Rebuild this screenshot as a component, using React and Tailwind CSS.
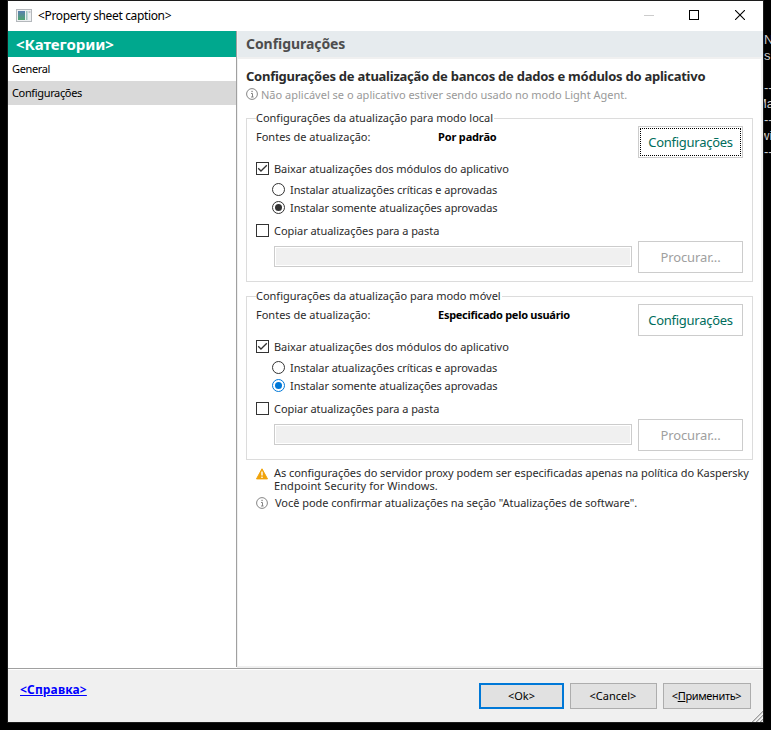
import React, { useState } from 'react'

const CATEGORIES = ['General', 'Configurações']

const GROUPS = [
  {
    id: 'local',
    legend: 'Configurações da atualização para modo local',
    source: 'Por padrão',
    sourceClass: 'tracking-[-0.16px]',
    focused: true,
    radioColor: '#333333',
  },
  {
    id: 'mobile',
    legend: 'Configurações da atualização para modo móvel',
    source: 'Especificado pelo usuário',
    sourceClass: 'tracking-[-0.27px]',
    focused: false,
    radioColor: '#0078d7',
  },
]

// what is left visible of the console window behind the dialog
const CONSOLE_LINES = [
  { text: 'N', className: 'mt-[32px]' },
  { text: 's', className: '' },
  { text: '--', className: 'mt-[16px]' },
  { text: 'Ma', className: '-indent-[8px]' },
  { text: '--', className: '' },
  { text: 'wi', className: '-indent-[4px]' },
  { text: '--', className: '' },
]

const InfoIcon = ({ className = '' }) => (
  <svg className={`shrink-0 ${className}`} width="12" height="12" viewBox="0 0 12 12" fill="none">
    <circle cx="6" cy="6" r="5.4" stroke="#858585" />
    <path d="M5 5.5h1.5V9M5 9h2.6" stroke="#858585" />
    <rect x="5.4" y="2.8" width="1.3" height="1.3" fill="#858585" />
  </svg>
)

const WarningIcon = ({ className = '' }) => (
  <svg className={`shrink-0 ${className}`} width="12" height="12" viewBox="0 0 12 12">
    <path d="M6 0.8L11.5 10.9H0.5z" fill="#f0a30a" stroke="#f0a30a" strokeLinejoin="round" />
    <path d="M6 3.5v4" stroke="#fff" strokeWidth="1.4" />
    <rect x="5.3" y="8.6" width="1.4" height="1.4" fill="#fff" />
  </svg>
)

const AppIcon = () => (
  <svg className="shrink-0" width="16" height="14" viewBox="0 0 16 14">
    <defs>
      <linearGradient id="pane" x1="0" y1="0" x2="0" y2="1">
        <stop offset="0" stopColor="#5a7fb0" />
        <stop offset="1" stopColor="#4fa56f" />
      </linearGradient>
    </defs>
    <rect x="0.5" y="0.5" width="15" height="12" fill="#eef0f2" stroke="#b4b8bc" />
    <rect x="2" y="2" width="7" height="9" fill="url(#pane)" />
    <rect x="10" y="2" width="1.5" height="9" fill="#9cc4bc" />
    <rect x="12.5" y="2" width="2" height="2" fill="#c3c8cd" />
  </svg>
)

const TitleBar = () => (
  <div className="h-[30px] flex items-start bg-white pl-2">
    <div className="flex items-center h-[29px] gap-[6px]">
      <AppIcon />
      <span className="text-[12px] leading-[18px] pt-px text-black tracking-[-0.36px]">{'<Property sheet caption>'}</span>
    </div>
    <div className="ml-auto flex gap-[35px] mr-[18px] mt-[9px]">
      <svg width="10" height="10" viewBox="0 0 10 10">
        <rect y="5" width="10" height="1" fill="#cccccc" />
      </svg>
      <svg width="10" height="10" viewBox="0 0 10 10" fill="none">
        <rect x="0.5" y="0.5" width="9" height="9" stroke="#000" />
      </svg>
      <svg className="ml-px" width="10" height="10" viewBox="0 0 10 10">
        <path d="M0 0L10 10M10 0L0 10" stroke="#000" strokeWidth="1.1" />
      </svg>
    </div>
  </div>
)

const Sidebar = ({ selected, onSelect }) => (
  <div className="w-[229px] h-[636px] border-r border-[#a0a0a0] bg-white shrink-0">
    <div className="h-[26px] leading-[26px] bg-[#00a88e] text-white text-[15px] font-bold pl-2 tracking-[-0.05px]">
      {'<Категории>'}
    </div>
    {CATEGORIES.map(name => (
      <div
        key={name}
        onClick={() => onSelect(name)}
        className={`h-6 leading-[24px] pl-1 text-black tracking-[-0.35px] ${name === selected ? 'bg-[#d9d9d9]' : ''}`}
      >
        {name}
      </div>
    ))}
  </div>
)

const Checkbox = ({ checked, label, className }) => (
  <div className={`flex items-start h-[13px] ${className}`}>
    <span className="w-[13px] h-[13px] border border-[#333333] shrink-0">
      {checked && (
        <svg className="block" width="11" height="11" viewBox="0 0 11 11" fill="none">
          <path d="M1.2 5.2L4 8L9.8 2.2" stroke="#333" strokeWidth="1.3" />
        </svg>
      )}
    </span>
    <span className="ml-[5px] leading-[13px] tracking-[-0.05px] whitespace-nowrap">{label}</span>
  </div>
)

const Radio = ({ checked, color, label, className }) => (
  <div className={`flex items-start h-[13px] pl-4 ${className}`}>
    <svg className="shrink-0" width="13" height="13" viewBox="0 0 13 13">
      <circle cx="6.5" cy="6.5" r="6" fill="#fff" stroke={checked ? color : '#333333'} />
      {checked && <circle cx="6.5" cy="6.5" r="3.5" fill={color} />}
    </svg>
    <span className="ml-[5px] leading-[13px] tracking-[-0.08px] whitespace-nowrap">{label}</span>
  </div>
)

const PanelButton = ({ children, focused, disabled }) => (
  <button
    disabled={disabled}
    className={`w-[105px] h-8 p-px border border-[#cccccc] bg-white text-[13px] shrink-0 ml-auto ${
      disabled ? 'text-[#a0a0a0] tracking-[-0.1px]' : 'text-[#006d5c] tracking-[-0.26px]'
    }`}
  >
    <span
      className={`flex items-center justify-center w-full h-full pt-[2px] border ${
        focused ? 'border-dotted border-black' : 'border-transparent'
      }`}
    >
      {children}
    </span>
  </button>
)

const UpdateGroup = ({ group, className = '' }) => (
  <fieldset className={`border border-[#dcdcdc] px-[9px] pb-2 ${className}`}>
    <legend className="h-[13px] leading-[11px] pr-px tracking-[-0.01px]">{group.legend}</legend>
    <div className="flex items-start pt-px">
      <span className="w-[182px] mt-1 leading-[13px]">Fontes de atualização:</span>
      <span className={`mt-1 leading-[13px] font-bold text-black ${group.sourceClass}`}>{group.source}</span>
      <PanelButton focused={group.focused}>Configurações</PanelButton>
    </div>
    <Checkbox checked label="Baixar atualizações dos módulos do aplicativo" className="mt-1" />
    <Radio color={group.radioColor} label="Instalar atualizações críticas e aprovadas" className="mt-2" />
    <Radio checked color={group.radioColor} label="Instalar somente atualizações aprovadas" className="mt-[5px]" />
    <Checkbox label="Copiar atualizações para a pasta" className="mt-[10px]" />
    <div className="flex items-start mt-1">
      <div className="w-[358px] h-[21px] ml-[18px] mt-[5px] border border-[#cccccc] p-px">
        <div className="h-full bg-[#f0f0f0]" />
      </div>
      <PanelButton disabled>Procurar...</PanelButton>
    </div>
  </fieldset>
)

const Content = () => (
  <div className="grow ml-px bg-[#f0f0f0] text-[#2b2b2b]">
    <div className="h-[26px] leading-[26px] pl-2 bg-[#e6ebee] text-[#4d4d4d] text-[14px] font-bold tracking-[-0.06px]">
      Configurações
    </div>
    <div className="mt-[2px] mr-[2px] h-[607px] bg-white pl-2 pr-2">
      <h1 className="pt-2 leading-[18px] text-[13px] font-bold tracking-[-0.25px] whitespace-nowrap">
        Configurações de atualização de bancos de dados e módulos do aplicativo
      </h1>
      <div className="flex items-start mt-[3px] text-[#999999]">
        <InfoIcon />
        <span className="ml-[3px] leading-[13px] whitespace-nowrap">
          Não aplicável se o aplicativo estiver sendo usado no modo Light Agent.
        </span>
      </div>
      <UpdateGroup group={GROUPS[0]} className="mt-[11px]" />
      <UpdateGroup group={GROUPS[1]} className="mt-2" />
      <div className="flex items-start mt-[6px] ml-[10px]">
        <WarningIcon className="mt-[2px]" />
        <div className="ml-[6px] leading-[13px] whitespace-nowrap">
          <p className="tracking-[-0.05px]">
            As configurações do servidor proxy podem ser especificadas apenas na política do Kaspersky
          </p>
          <p className="tracking-[0.08px]">Endpoint Security for Windows.</p>
        </div>
      </div>
      <div className="flex items-start mt-1 ml-[10px]">
        <InfoIcon className="mt-px" />
        <p className="ml-[7px] leading-[13px] tracking-[-0.03px] whitespace-nowrap">
          Você pode confirmar atualizações na seção "Atualizações de software".
        </p>
      </div>
    </div>
  </div>
)

const Footer = () => (
  <div className="h-[53px] bg-[#f0f0f0] border-t border-white flex items-start">
    <a className="ml-[12px] mt-3 leading-[16px] text-[12px] font-bold text-[#0000ff] underline tracking-[0.15px]">
      {'<Справка>'}
    </a>
    <div className="ml-auto mt-[13px] flex text-black">
      <button className="w-[85px] h-[26px] border-2 border-[#0078d7] bg-[#e1e1e1]">{'<Ok>'}</button>
      <button className="w-[87px] h-[26px] ml-[6px] pr-px border border-[#adadad] bg-[#e1e1e1]">{'<Cancel>'}</button>
      <button className="w-[88px] h-[26px] ml-[6px] pr-px border border-[#adadad] bg-[#e1e1e1] tracking-[-0.35px]">
        {'<'}<span className="underline">П</span>{'рименить>'}
      </button>
    </div>
    <svg className="self-end shrink-0" width="12" height="12" viewBox="0 0 12 12">
      <path d="M1 12L12 1M5 12L12 5M9 12L12 9" stroke="#a0a0a0" strokeWidth="1.5" />
      <path d="M0 12L12 0M4 12L12 4M8 12L12 8" stroke="#fff" strokeWidth="0.8" />
    </svg>
  </div>
)

export default function App() {
  const [selected, setSelected] = useState('Configurações')

  return (
    <div className="w-[771px] h-[730px] bg-black flex overflow-hidden text-[11px] font-['Noto_Sans','Open_Sans',sans-serif]">
      <div className="w-[757px] h-[723px] ml-[7px] border border-[#1c1c1c] flex flex-col shrink-0">
        <TitleBar />
        <div className="flex h-[637px] bg-[#f0f0f0]">
          <div className="bg-white">
            <Sidebar selected={selected} onSelect={setSelected} />
          </div>
          <Content />
        </div>
        <div className="h-px bg-[#a0a0a0] shrink-0" />
        <Footer />
      </div>
      <div className="w-[7px] overflow-hidden text-[#cccccc] text-[13px] font-['Liberation_Sans',sans-serif]">
        {CONSOLE_LINES.map((line, i) => (
          <div key={i} className={`h-4 leading-[16px] whitespace-nowrap ${line.className}`}>{line.text}</div>
        ))}
      </div>
    </div>
  )
}
